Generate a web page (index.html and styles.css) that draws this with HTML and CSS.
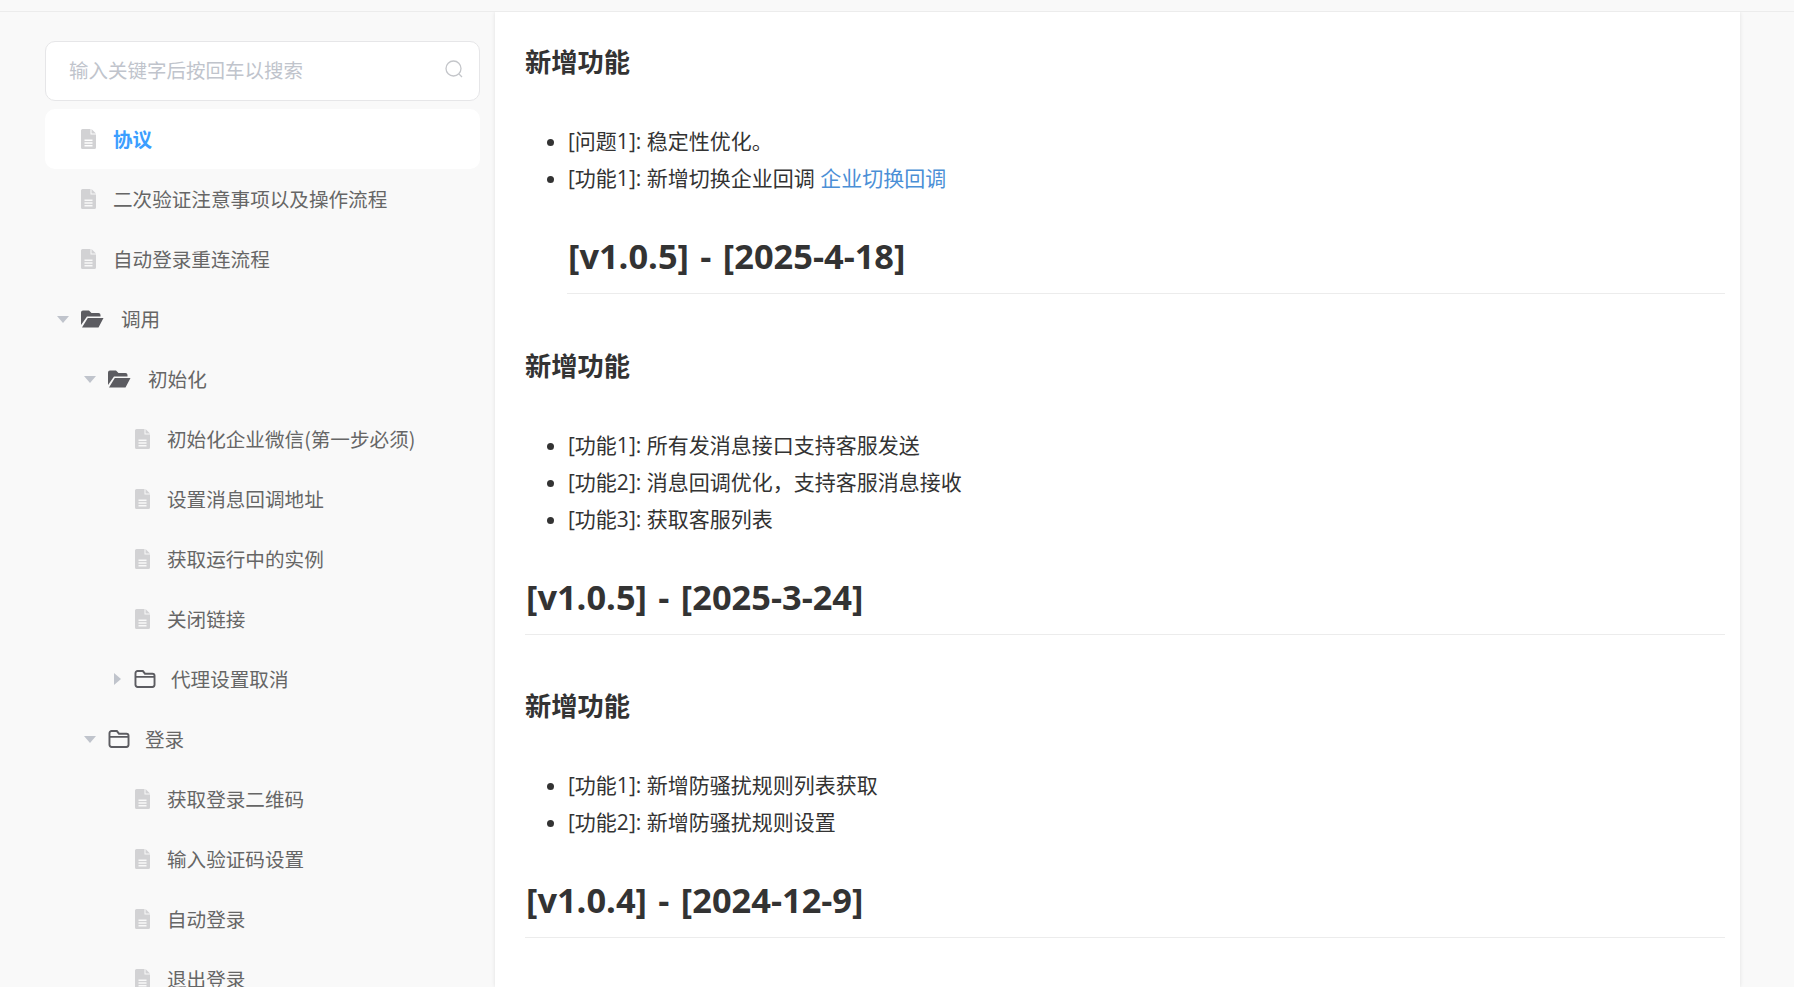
FILE: index.html
```html
<!DOCTYPE html>
<html lang="zh-CN">
<head>
<meta charset="utf-8">
<title>更新日志</title>
<link rel="stylesheet" href="styles.css">
</head>
<body>
<svg class="defs" width="0" height="0" aria-hidden="true">
  <symbol id="doc" viewBox="0 0 15 20"><path d="M1.5 0H9.5V5.5H15V18.5A1.5 1.5 0 0 1 13.500 20H1.500A1.500 1.500 0 0 1 0 18.500V1.500A1.500 1.500 0 0 1 1.500 0ZM10.500 0L15 4.500H10.500ZM3.500 10.500V12H11.500V10.500ZM3.500 13.300V14.700H11.500V13.300ZM3.500 16V17.500H11.500V16Z" fill="#d2d2d4" fill-rule="evenodd"/></symbol>
  <symbol id="open" viewBox="0 0 23 18"><path d="M0 2.500A2 2 0 0 1 2 .5H8L10.500 3H17.500A2 2 0 0 1 19.500 5V6.500H6L0 15ZM6.800 8H22.500L17.500 17.500H1Z" fill="#5c5c61"/></symbol>
  <symbol id="closed" viewBox="0 0 20 17"><path d="M1 3A2 2 0 0 1 3 1H8L10 3.500H17A2 2 0 0 1 19 5.500V14A2 2 0 0 1 17 16H3A2 2 0 0 1 1 14ZM1 6.500H19" fill="none" stroke="#5c5c61" stroke-width="1.800"/></symbol>
</svg>
<header class="topbar"></header>
<div class="layout">
  <aside class="sidebar">
    <div class="search">
      <span class="search-text">输入关键字后按回车以搜索</span>
      <svg class="search-icon" viewBox="0 0 18 18"><circle cx="8.500" cy="8.500" r="7.500" fill="none" stroke="#c4c6ca" stroke-width="1.300"/><path d="M14 14L17 17" stroke="#c4c6ca" stroke-width="1.300"/></svg>
    </div>
    <nav class="tree">
      <a class="item active d0"><svg class="i-doc"><use href="#doc"/></svg><span>协议</span></a>
      <a class="item d0"><svg class="i-doc"><use href="#doc"/></svg><span>二次验证注意事项以及操作流程</span></a>
      <a class="item d0"><svg class="i-doc"><use href="#doc"/></svg><span>自动登录重连流程</span></a>
      <a class="item f0"><i class="arrow down"></i><svg class="i-open"><use href="#open"/></svg><span class="t-open">调用</span></a>
      <a class="item f1"><i class="arrow down"></i><svg class="i-open"><use href="#open"/></svg><span class="t-open">初始化</span></a>
      <a class="item d2"><svg class="i-doc"><use href="#doc"/></svg><span>初始化企业微信(第一步必须)</span></a>
      <a class="item d2"><svg class="i-doc"><use href="#doc"/></svg><span>设置消息回调地址</span></a>
      <a class="item d2"><svg class="i-doc"><use href="#doc"/></svg><span>获取运行中的实例</span></a>
      <a class="item d2"><svg class="i-doc"><use href="#doc"/></svg><span>关闭链接</span></a>
      <a class="item f2"><i class="arrow right"></i><svg class="i-closed"><use href="#closed"/></svg><span class="t-closed">代理设置取消</span></a>
      <a class="item f1"><i class="arrow down"></i><svg class="i-closed"><use href="#closed"/></svg><span class="t-closed">登录</span></a>
      <a class="item d2"><svg class="i-doc"><use href="#doc"/></svg><span>获取登录二维码</span></a>
      <a class="item d2"><svg class="i-doc"><use href="#doc"/></svg><span>输入验证码设置</span></a>
      <a class="item d2"><svg class="i-doc"><use href="#doc"/></svg><span>自动登录</span></a>
      <a class="item d2"><svg class="i-doc"><use href="#doc"/></svg><span>退出登录</span></a>
    </nav>
  </aside>
  <main class="content">
    <h3>新增功能</h3>
    <ul>
      <li>[问题1]: 稳定性优化。</li>
      <li>[功能1]: 新增切换企业回调 <a href="#">企业切换回调</a></li>
    </ul>
    <h2 class="nested">[v1.0.5] - [2025-4-18]</h2>
    <h3>新增功能</h3>
    <ul>
      <li>[功能1]: 所有发消息接口支持客服发送</li>
      <li>[功能2]: 消息回调优化，支持客服消息接收</li>
      <li>[功能3]: 获取客服列表</li>
    </ul>
    <h2>[v1.0.5] - [2025-3-24]</h2>
    <h3>新增功能</h3>
    <ul>
      <li>[功能1]: 新增防骚扰规则列表获取</li>
      <li>[功能2]: 新增防骚扰规则设置</li>
    </ul>
    <h2>[v1.0.4] - [2024-12-9]</h2>
  </main>
  <div class="rail"></div>
</div>
</body>
</html>
```
FILE: styles.css
```css
* { box-sizing: border-box; }
html, body { margin: 0; height: 987px; overflow: hidden; }
body {
  background: #f9f9f9;
  font-family: "Open Sans", "Noto Sans CJK SC", sans-serif;
  color: #333;
}
.defs { position: absolute; }
.topbar { height: 12px; background: #f9f9f9; border-bottom: 1px solid #ececec; }
.layout { display: flex; height: 975px; overflow: hidden; }
.sidebar { width: 495px; flex: none; padding: 29px 15px 0 45px; overflow: hidden; }
.search {
  height: 60px; border: 1px solid #e6e6e8; border-radius: 10px; background: #fff;
  display: flex; align-items: center; justify-content: space-between;
  padding: 0 16px 4px 23px; margin-bottom: 8px;
}
.search-text { font: 400 19.5px/1 "Noto Sans CJK SC", sans-serif; color: #c0c4cc; padding-top: 2px; }
.search-icon { width: 18px; height: 18px; }
.tree { width: 435px; }
.item {
  display: flex; align-items: center; height: 60px; border-radius: 10px;
  font-size: 19.6px; color: #666; font-family: "Noto Sans CJK SC", sans-serif;
}
.item span { padding-bottom: 2px; }
.item.active { background: #fff; color: #3b9eff; font-weight: 700; }
.d0 { padding-left: 36px; }
.d2 { padding-left: 90px; }
.f0 { padding-left: 12px; }
.f1 { padding-left: 39px; }
.f2 { padding-left: 69px; }
.i-doc { width: 15px; height: 20px; margin-right: 17px; flex: none; }
.i-open { width: 23px; height: 18px; margin-right: 17px; flex: none; }
.i-closed { width: 22px; height: 18px; margin-right: 15px; flex: none; }
.arrow { width: 0; height: 0; flex: none; }
.arrow.down { border: 6px solid transparent; border-top: 7px solid #c0c4cc; border-bottom: 0; margin-right: 12px; }
.arrow.right { border: 6px solid transparent; border-left: 7px solid #c0c4cc; border-right: 0; margin-right: 13px; }
.content {
  width: 1245px; flex: none; background: #fff; padding: 0 15px 0 30px;
  box-shadow: 0 0 4px rgba(0, 0, 0, .1); overflow: hidden;
}
h3 { font-size: 26.25px; line-height: 36px; font-weight: 700; margin: 0; }
.content > h3:first-child { margin-top: 32px; }
ul { margin: 43px 0 0; padding: 0 0 0 43px; }
li { font-size: 21px; line-height: 37px; }
li a { color: #4b8fd6; text-decoration: none; }
h2 {
  font-size: 34.4px; word-spacing: 2.5px; line-height: 46px; font-weight: 700; margin: 36px 0 53.5px;
  padding: 0 0 14px 1px; border-bottom: 1px solid #ececec;
}
h2.nested { margin-left: 42px; }
.rail { flex: 1; }
```
